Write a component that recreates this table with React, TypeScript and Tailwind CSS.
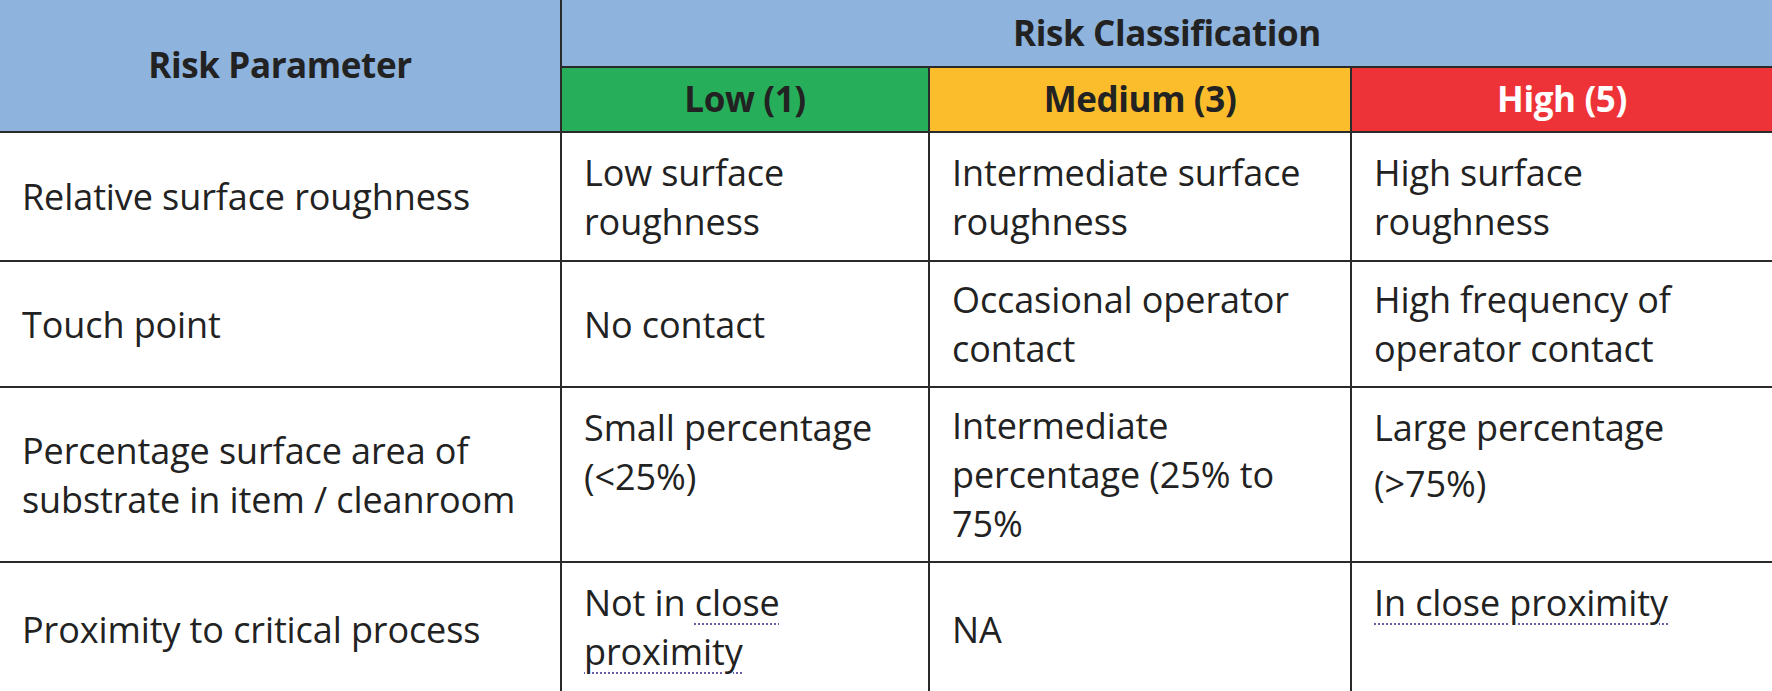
import type {ReactNode} from "react";

const FONT = "font-['Open_Sans','Lato','Liberation_Sans',sans-serif]";

type CellProps = {
    children: ReactNode;
    top?: boolean;
    last?: boolean;
    className?: string;
};

const Cell = ({children, top, last, className = ""}: CellProps) => (
    <div
        className={`flex ${top ? "items-start pt-[15px]" : "items-center"} border-b-2 border-[#2a2a2a] px-[22px] ${
            last ? "" : "border-r-2"
        } bg-white ${className}`}
    >
        <div className="whitespace-nowrap text-[36px] leading-[49px] tracking-[-0.1px] text-[#222]">{children}</div>
    </div>
);

const Dotted = ({children}: {children: ReactNode}) => (
    <span className="underline decoration-dotted decoration-2 decoration-[#6b5ca8] underline-offset-[7px]">{children}</span>
);

const HEAD = "flex items-center justify-center border-[#2a2a2a] text-[35px] font-bold tracking-[-0.4px]";

export default function App() {
    return (
        <div className={`h-[691px] w-[1772px] overflow-hidden bg-white ${FONT}`}>
            <div className="grid grid-cols-[562px_368px_422px_420px] grid-rows-[68px_65px_129px_126px_175px_134px]">
                {/* header */}
                <div className={`${HEAD} row-span-2 border-r-2 border-b-2 bg-[#8eb3dd] text-[#222]`}>Risk Parameter</div>
                <div className={`${HEAD} col-span-3 border-b-2 bg-[#8eb3dd] text-[#222]`}>Risk Classification</div>
                <div className={`${HEAD} border-r-2 border-b-2 bg-[#27ae5a] text-[#222]`}>Low (1)</div>
                <div className={`${HEAD} border-r-2 border-b-2 bg-[#fbbd2c] text-[#222]`}>Medium (3)</div>
                <div className={`${HEAD} border-b-2 bg-[#ee3338] text-white`}>High (5)</div>

                {/* row 1 */}
                <Cell>Relative surface roughness</Cell>
                <Cell>
                    Low surface
                    <br />
                    roughness
                </Cell>
                <Cell>
                    Intermediate surface
                    <br />
                    roughness
                </Cell>
                <Cell last>
                    High surface
                    <br />
                    roughness
                </Cell>

                {/* row 2 */}
                <Cell>Touch point</Cell>
                <Cell>No contact</Cell>
                <Cell>
                    Occasional operator
                    <br />
                    contact
                </Cell>
                <Cell last>
                    High frequency of
                    <br />
                    operator contact
                </Cell>

                {/* row 3 */}
                <Cell>
                    Percentage surface area of
                    <br />
                    substrate in item / cleanroom
                </Cell>
                <Cell top>
                    Small percentage
                    <br />
                    (&lt;25%)
                </Cell>
                <Cell>
                    Intermediate
                    <br />
                    percentage (25% to
                    <br />
                    75%
                </Cell>
                <Cell top last>
                    <div>Large percentage</div>
                    <div className="mt-[7px]">(&gt;75%)</div>
                </Cell>

                {/* row 4 */}
                <Cell>Proximity to critical process</Cell>
                <Cell top>
                    Not in <Dotted>close</Dotted>
                    <br />
                    <Dotted>proximity</Dotted>
                </Cell>
                <Cell>NA</Cell>
                <Cell top last>
                    <Dotted>In close proximity</Dotted>
                </Cell>
            </div>
        </div>
    );
}
